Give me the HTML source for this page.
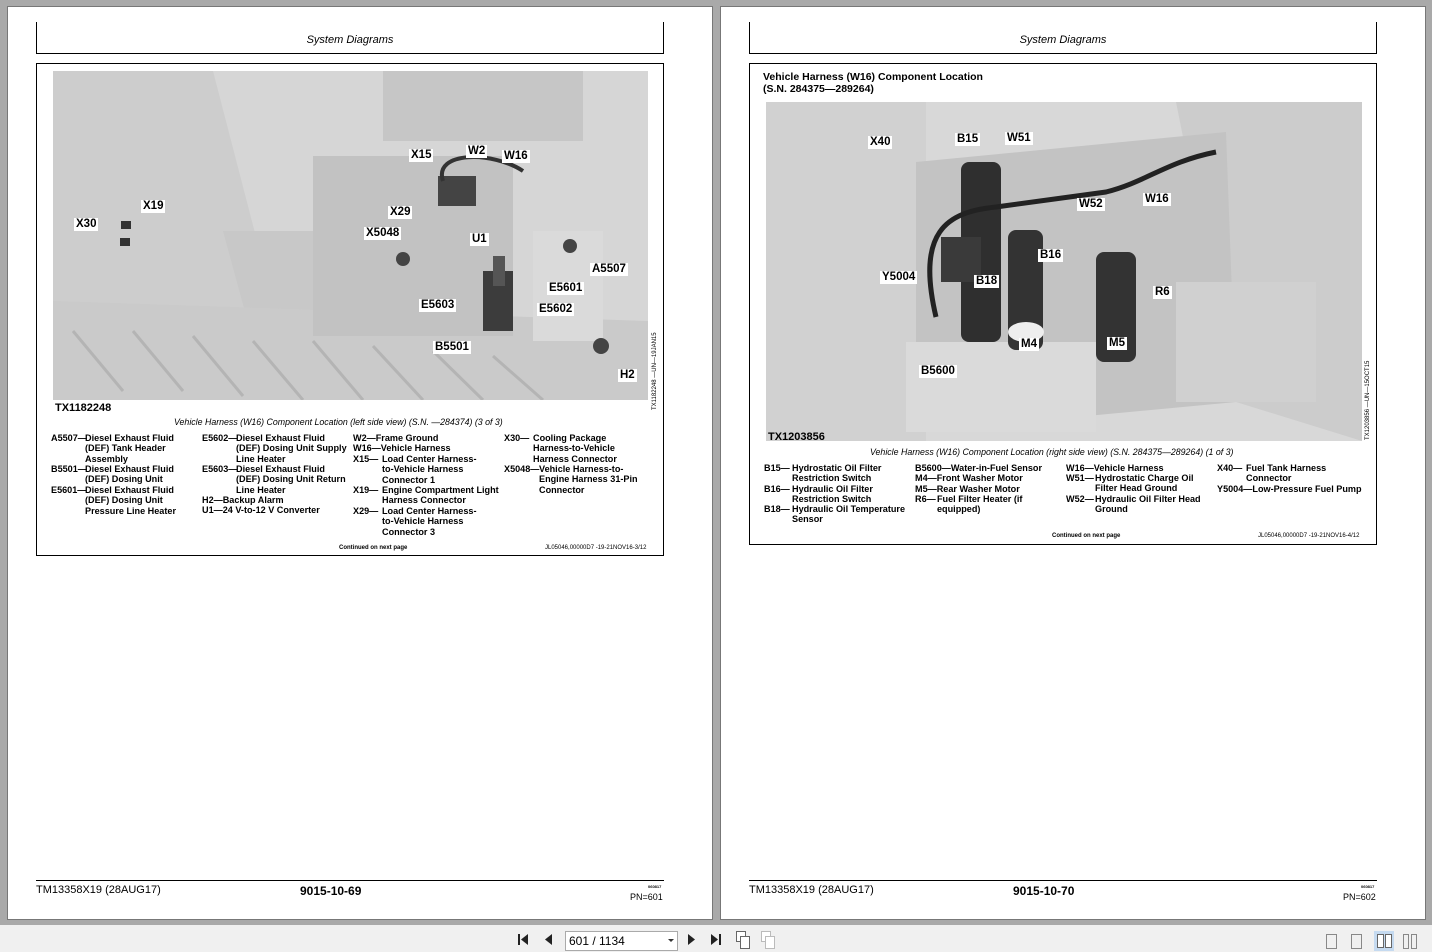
<!DOCTYPE html>
<html><head><meta charset="utf-8"><style>
*{margin:0;padding:0;box-sizing:border-box}
body{width:1432px;height:952px;background:#a9a9a9;position:relative;overflow:hidden;font-family:"Liberation Sans",Arial,sans-serif;color:#000}
.pg{position:absolute;top:6px;width:706px;height:914px;background:#fff;border:1px solid #777}
.a{position:absolute}
.hl{position:absolute;background:#000;height:1px}
.vl{position:absolute;background:#000;width:1px}
.hdr{position:absolute;font-style:italic;font-size:11px;width:300px;text-align:center}
.img{position:absolute;background:#d3d3d3;overflow:hidden}
.lb{position:absolute;background:#fff;font-weight:bold;font-size:11.5px;padding:0 2px;line-height:13px}
.leg{position:absolute;font-weight:bold;font-size:9.1px;line-height:10.35px;display:flex;white-space:nowrap}
.cap{position:absolute;font-style:italic;font-size:8.8px;white-space:nowrap}
.tx{position:absolute;font-weight:bold;font-size:11px}
.sm{position:absolute;font-weight:bold;font-size:6px;white-space:nowrap}
.ft{position:absolute;font-size:11px;white-space:nowrap}
.rot{position:absolute;font-size:6px;transform:rotate(-90deg);transform-origin:left top;white-space:nowrap}
.tb{position:absolute;left:0;top:925px;width:1432px;height:27px;background:#f0f0f0}
</style></head><body>

<!-- LEFT PAGE -->
<div class="pg" style="left:7px"></div>
<div class="vl" style="left:36px;top:22px;height:32px"></div>
<div class="vl" style="left:663px;top:22px;height:32px"></div>
<div class="hl" style="left:36px;top:53px;width:628px"></div>
<div class="hdr" style="left:200px;top:34px">System Diagrams</div>
<div class="hl" style="left:36px;top:63px;width:628px"></div>
<div class="vl" style="left:36px;top:63px;height:493px"></div>
<div class="vl" style="left:663px;top:63px;height:493px"></div>
<div class="hl" style="left:36px;top:555px;width:628px"></div>

<div class="img" style="left:53px;top:71px;width:595px;height:329px">
<svg width="595" height="329" style="position:absolute;left:0;top:0">
<rect x="0" y="0" width="595" height="329" fill="#d6d6d6"/>
<polygon points="0,0 160,0 230,270 0,330" fill="#cdcdcd"/>
<polygon points="170,160 290,160 300,260 200,270" fill="#c8c8c8"/>
<polygon points="0,230 595,250 595,329 0,329" fill="#cacaca"/>
<g stroke="#b4b4b4" stroke-width="3"><line x1="20" y1="260" x2="70" y2="320"/><line x1="80" y1="260" x2="130" y2="320"/><line x1="140" y1="265" x2="190" y2="325"/><line x1="200" y1="270" x2="250" y2="329"/><line x1="260" y1="270" x2="310" y2="329"/><line x1="320" y1="275" x2="370" y2="329"/><line x1="380" y1="280" x2="430" y2="329"/><line x1="440" y1="285" x2="490" y2="329"/></g>
<rect x="330" y="0" width="200" height="70" fill="#c6c6c6"/>
<rect x="260" y="85" width="200" height="180" fill="#c2c2c2"/>
<rect x="480" y="160" width="70" height="110" fill="#dadada"/>
<rect x="385" y="105" width="38" height="30" fill="#444"/>
<path d="M390 110 C380 80,440 80,470 100" stroke="#333" stroke-width="4" fill="none"/>
<rect x="430" y="200" width="30" height="60" fill="#3c3c3c"/>
<rect x="440" y="185" width="12" height="30" fill="#555"/>
<circle cx="350" cy="188" r="7" fill="#444"/><circle cx="517" cy="175" r="7" fill="#444"/><circle cx="548" cy="275" r="8" fill="#444"/>
<rect x="68" y="150" width="10" height="8" fill="#333"/><rect x="67" y="167" width="10" height="8" fill="#333"/>
</svg>
</div>
<div class="lb" style="left:409px;top:149px">X15</div>
<div class="lb" style="left:466px;top:145px">W2</div>
<div class="lb" style="left:502px;top:150px">W16</div>
<div class="lb" style="left:141px;top:200px">X19</div>
<div class="lb" style="left:74px;top:218px">X30</div>
<div class="lb" style="left:388px;top:206px">X29</div>
<div class="lb" style="left:364px;top:227px">X5048</div>
<div class="lb" style="left:470px;top:233px">U1</div>
<div class="lb" style="left:590px;top:263px">A5507</div>
<div class="lb" style="left:547px;top:282px">E5601</div>
<div class="lb" style="left:419px;top:299px">E5603</div>
<div class="lb" style="left:537px;top:303px">E5602</div>
<div class="lb" style="left:433px;top:341px">B5501</div>
<div class="lb" style="left:618px;top:369px">H2</div>
<div class="rot" style="left:652px;top:410px">TX1182248 —UN—19JAN15</div>
<div class="tx" style="left:55px;top:402px">TX1182248</div>
<div class="cap" style="left:174px;top:417px">Vehicle Harness (W16) Component Location (left side view) (S.N. —284374) (3 of 3)</div>

<div class="leg" style="left:51px;top:433px"><span style="width:34px">A5507—</span><span>Diesel Exhaust Fluid<br>(DEF) Tank Header<br>Assembly</span></div>
<div class="leg" style="left:51px;top:464px"><span style="width:34px">B5501—</span><span>Diesel Exhaust Fluid<br>(DEF) Dosing Unit</span></div>
<div class="leg" style="left:51px;top:485px"><span style="width:34px">E5601—</span><span>Diesel Exhaust Fluid<br>(DEF) Dosing Unit<br>Pressure Line Heater</span></div>
<div class="leg" style="left:202px;top:433px"><span style="width:34px">E5602—</span><span>Diesel Exhaust Fluid<br>(DEF) Dosing Unit Supply<br>Line Heater</span></div>
<div class="leg" style="left:202px;top:464px"><span style="width:34px">E5603—</span><span>Diesel Exhaust Fluid<br>(DEF) Dosing Unit Return<br>Line Heater</span></div>
<div class="leg" style="left:202px;top:495px"><span>H2—Backup Alarm<br>U1—24 V-to-12 V Converter</span></div>
<div class="leg" style="left:353px;top:433px"><span>W2—Frame Ground<br>W16—Vehicle Harness</span></div>
<div class="leg" style="left:353px;top:454px"><span style="width:29px">X15—</span><span>Load Center Harness-<br>to-Vehicle Harness<br>Connector 1</span></div>
<div class="leg" style="left:353px;top:485px"><span style="width:29px">X19—</span><span>Engine Compartment Light<br>Harness Connector</span></div>
<div class="leg" style="left:353px;top:506px"><span style="width:29px">X29—</span><span>Load Center Harness-<br>to-Vehicle Harness<br>Connector 3</span></div>
<div class="leg" style="left:504px;top:433px"><span style="width:29px">X30—</span><span>Cooling Package<br>Harness-to-Vehicle<br>Harness Connector</span></div>
<div class="leg" style="left:504px;top:464px"><span style="width:35px">X5048—</span><span>Vehicle Harness-to-<br>Engine Harness 31-Pin<br>Connector</span></div>
<div class="sm" style="left:339px;top:545px">Continued on next page</div>
<div class="sm" style="left:545px;top:545px;font-weight:normal">JL05046,00000D7 -19-21NOV16-3/12</div>

<div class="hl" style="left:36px;top:880px;width:628px"></div>
<div class="ft" style="left:36px;top:884px">TM13358X19 (28AUG17)</div>
<div class="ft" style="left:300px;top:884px;font-weight:bold;font-size:12px">9015-10-69</div>
<div class="sm" style="left:648px;top:884px;font-size:4px">060817</div>
<div class="ft" style="left:630px;top:892px;font-size:9px">PN=601</div>

<!-- RIGHT PAGE -->
<div class="pg" style="left:720px"></div>
<div class="vl" style="left:749px;top:22px;height:32px"></div>
<div class="vl" style="left:1376px;top:22px;height:32px"></div>
<div class="hl" style="left:749px;top:53px;width:628px"></div>
<div class="hdr" style="left:913px;top:34px">System Diagrams</div>
<div class="hl" style="left:749px;top:63px;width:628px"></div>
<div class="vl" style="left:749px;top:63px;height:482px"></div>
<div class="vl" style="left:1376px;top:63px;height:482px"></div>
<div class="hl" style="left:749px;top:544px;width:628px"></div>
<div class="tx" style="left:763px;top:71px;font-size:10.5px;line-height:12px">Vehicle Harness (W16) Component Location<br>(S.N. 284375—289264)</div>

<div class="img" style="left:766px;top:102px;width:596px;height:339px">
<svg width="596" height="339" style="position:absolute;left:0;top:0">
<rect width="596" height="339" fill="#d8d8d8"/>
<polygon points="0,0 160,0 160,339 0,339" fill="#d1d1d1"/>
<polygon points="410,0 596,0 596,339 470,300" fill="#cccccc"/>
<polygon points="150,60 460,30 470,300 150,330" fill="#c3c3c3"/>
<rect x="140" y="240" width="190" height="90" fill="#dadada"/>
<rect x="195" y="60" width="40" height="180" rx="8" fill="#2f2f2f"/>
<rect x="242" y="128" width="35" height="120" rx="8" fill="#333"/>
<rect x="330" y="150" width="40" height="110" rx="8" fill="#333"/>
<rect x="175" y="135" width="40" height="45" fill="#3a3a3a"/>
<path d="M170 215 C150 130,180 110,230 105 L340 90 C380 80,400 60,450 50" stroke="#222" stroke-width="5" fill="none"/>
<ellipse cx="260" cy="230" rx="18" ry="10" fill="#eee"/>
<rect x="410" y="180" width="140" height="120" fill="#d0d0d0"/>
</svg>
</div>
<div class="lb" style="left:868px;top:136px">X40</div>
<div class="lb" style="left:955px;top:133px">B15</div>
<div class="lb" style="left:1005px;top:132px">W51</div>
<div class="lb" style="left:1077px;top:198px">W52</div>
<div class="lb" style="left:1143px;top:193px">W16</div>
<div class="lb" style="left:1038px;top:249px">B16</div>
<div class="lb" style="left:880px;top:271px">Y5004</div>
<div class="lb" style="left:974px;top:275px">B18</div>
<div class="lb" style="left:1153px;top:286px">R6</div>
<div class="lb" style="left:1019px;top:338px">M4</div>
<div class="lb" style="left:1107px;top:337px">M5</div>
<div class="lb" style="left:919px;top:365px">B5600</div>
<div class="rot" style="left:1365px;top:440px">TX1203856 —UN—15OCT15</div>
<div class="tx" style="left:768px;top:431px">TX1203856</div>
<div class="cap" style="left:870px;top:447px">Vehicle Harness (W16) Component Location (right side view) (S.N. 284375—289264) (1 of 3)</div>

<div class="leg" style="left:764px;top:463px"><span style="width:28px">B15—</span><span>Hydrostatic Oil Filter<br>Restriction Switch</span></div>
<div class="leg" style="left:764px;top:484px"><span style="width:28px">B16—</span><span>Hydraulic Oil Filter<br>Restriction Switch</span></div>
<div class="leg" style="left:764px;top:504px"><span style="width:28px">B18—</span><span>Hydraulic Oil Temperature<br>Sensor</span></div>
<div class="leg" style="left:915px;top:463px"><span>B5600—Water-in-Fuel Sensor<br>M4—Front Washer Motor<br>M5—Rear Washer Motor</span></div>
<div class="leg" style="left:915px;top:494px"><span style="width:22px">R6—</span><span>Fuel Filter Heater (if<br>equipped)</span></div>
<div class="leg" style="left:1066px;top:463px"><span>W16—Vehicle Harness</span></div>
<div class="leg" style="left:1066px;top:473px"><span style="width:29px">W51—</span><span>Hydrostatic Charge Oil<br>Filter Head Ground</span></div>
<div class="leg" style="left:1066px;top:494px"><span style="width:29px">W52—</span><span>Hydraulic Oil Filter Head<br>Ground</span></div>
<div class="leg" style="left:1217px;top:463px"><span style="width:29px">X40—</span><span>Fuel Tank Harness<br>Connector</span></div>
<div class="leg" style="left:1217px;top:484px"><span>Y5004—Low-Pressure Fuel Pump</span></div>
<div class="sm" style="left:1052px;top:533px">Continued on next page</div>
<div class="sm" style="left:1258px;top:533px;font-weight:normal">JL05046,00000D7 -19-21NOV16-4/12</div>

<div class="hl" style="left:749px;top:880px;width:628px"></div>
<div class="ft" style="left:749px;top:884px">TM13358X19 (28AUG17)</div>
<div class="ft" style="left:1013px;top:884px;font-weight:bold;font-size:12px">9015-10-70</div>
<div class="sm" style="left:1361px;top:884px;font-size:4px">060817</div>
<div class="ft" style="left:1343px;top:892px;font-size:9px">PN=602</div>

<!-- TOOLBAR -->
<div class="tb">
<svg width="1432" height="27" style="position:absolute;left:0;top:0">
<g fill="#222"><rect x="518" y="9" width="2" height="11"/><polygon points="528,9 521,14.5 528,20"/><polygon points="552,9 545,14.5 552,20"/>
<polygon points="688,9 695,14.5 688,20"/><polygon points="711,9 718,14.5 711,20"/><rect x="719" y="9" width="2" height="11"/></g>
<rect x="565.5" y="6.5" width="112" height="19" fill="#fff" stroke="#aaa"/>
<polygon points="668,14 674,14 671,17" fill="#333"/>
<rect x="736.5" y="6.5" width="9" height="10" fill="#fff" stroke="#666"/><rect x="740.5" y="11.5" width="9" height="12" fill="#fff" stroke="#666"/>
<rect x="761.5" y="6.5" width="9" height="10" fill="#fff" stroke="#bbb"/><rect x="765.5" y="11.5" width="9" height="12" fill="#fff" stroke="#bbb"/>
<rect x="1326.5" y="9.5" width="10" height="14" fill="none" stroke="#888"/>
<rect x="1351.5" y="9.5" width="10" height="14" fill="none" stroke="#888"/>
<rect x="1374" y="6" width="20" height="20" fill="#c5daf0"/>
<rect x="1377.5" y="9.5" width="6" height="13" fill="#fff" stroke="#666"/><rect x="1385.5" y="9.5" width="6" height="13" fill="#fff" stroke="#666"/>
<rect x="1403.5" y="9.5" width="5" height="14" fill="none" stroke="#888"/><rect x="1411.5" y="9.5" width="5" height="14" fill="none" stroke="#888"/>
</svg>
<div class="a" style="left:569px;top:9px;font-size:12px">601 / 1134</div>
</div>
</body></html>
